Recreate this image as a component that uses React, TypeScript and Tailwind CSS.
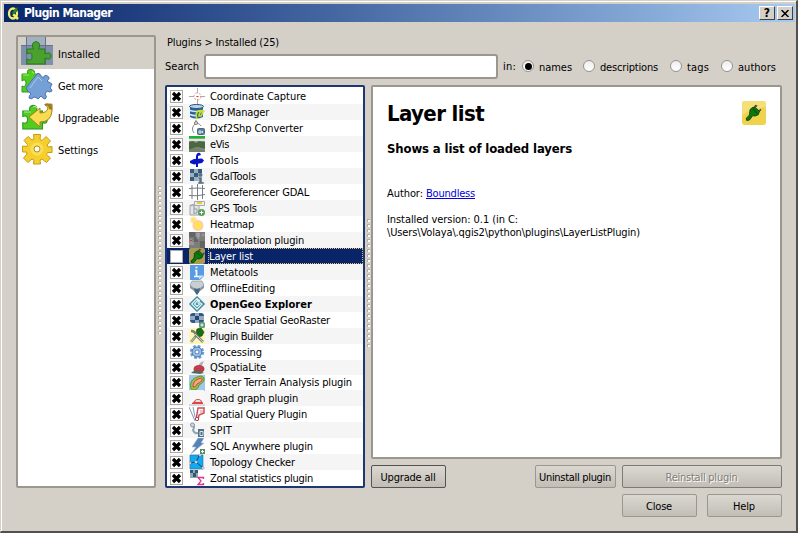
import { useLayoutEffect, useRef, useState } from "react";
import type { ReactNode } from "react";

// Text fitted to a given pixel width through letter spacing.
function T({ w, children, className = "" }: { w: number; children: string; className?: string }) {
  const ref = useRef<HTMLSpanElement>(null);
  const [ls, setLs] = useState(0);
  useLayoutEffect(() => {
    if (ref.current) setLs((w - ref.current.getBoundingClientRect().width) / children.length);
  }, []);
  return (
    <span ref={ref} style={{ letterSpacing: ls }} className={"inline-block whitespace-pre " + className}>
      {children}
    </span>
  );
}

const Ic = ({ children }: { children: ReactNode }) => (
  <svg viewBox="0 0 16 16" className="h-4 w-4 shrink-0">{children}</svg>
);

const plug = (
  <g>
    <path d="M9 4l1.500-2.500 1.500.5M12.500 7.500l2.500-2-.3-1" stroke="#444" strokeWidth="1.300" fill="none" />
    <path d="M5.500 5l2.500-2 2.500.2 3.500 3.500-1 3-3 1.300-2-.5-3 4-2.500.5-.5-2 3-3z" fill="#087c08" stroke="#103810" strokeWidth=".8" />
    <path d="M8 4.500l4 4" stroke="#0b4a10" />
  </g>
);

const icons: ReactNode[] = [
  <g><path d="M0 8.500h5M11 8.500h5M8.500 0v5M8.500 11v5" stroke="#aaa" /><circle cx="8.500" cy="8.500" r="3.500" fill="none" stroke="#ec8f8f" strokeDasharray="2 1.500" /><path d="M7.500 8.500h2" stroke="#c33" /></g>,
  <g><path d="M1 2v11q6 3 13 0V2" fill="#28629c" /><ellipse cx="7.500" cy="2.500" rx="7" ry="2" fill="#bdd6ea" stroke="#23527e" /><path d="M1 6.500q6 2 13 0M1 10.500q4 1.500 7 1" stroke="#d5e5f2" strokeWidth="1.600" fill="none" /><path d="M8 15q-2-5 1-8 3-1 5 0-4 1-4 5h2q2-3 2-5" fill="none" stroke="#c5dc2a" strokeWidth="1.700" /></g>,
  <g><path d="M7 0v3M7 3q-6 5-2 10M8 3q3 1 4 3" fill="none" stroke="#888" /><circle cx="7" cy="3" r="1.500" fill="#eee" stroke="#777" /><rect x="8.500" y="8.500" width="7" height="6" rx="1" fill="#5c7d93" stroke="#496a7e" /><path d="M10 13v-2h2v2zM13.500 11v2" stroke="#dce6ed" fill="none" /></g>,
  <g><path d="M0 1h16v15H0z" fill="#8da286" /><path d="M0 3h16v2H0z" fill="#dce6df" /><path d="M0 0h16v2H0z" fill="#19b52d" /><path d="M0 6l4-1 3 2 3-2 6 1v7l-8-2-8 3z" fill="#4b6741" /><path d="M0 14l7-3 9 3v2H0z" fill="#77826d" /></g>,
  <g fill="#0817c5"><path d="M7 15V4q1-4 4-3l1 2-3 1v11z" /><path d="M1 9l4-2 8-.5 2 2-2 2.500-8 1.500-4-1.500z" /></g>,
  <g><path d="M1 1h12v12H1z" fill="#98b1c0" /><path d="M1 1h4v4H1zM9 1h4v4H9zM5 5h4v4H5zM1 9h4v4H1z" fill="#365d77" /><circle cx="11.500" cy="7" r="2" fill="#577286" /><path d="M9 9h4v5h2v2H9v-2h1v-3H9z" fill="#577286" stroke="#ddd" strokeWidth=".5" /></g>,
  <path d="M3 1v14M8.500 0v16M13.500 1v14M0 4.500q8-1 16 0M0 11.500q8 1 16-1" fill="none" stroke="#747c85" />,
  <g><path d="M1 5h9v10H1z" fill="#e2e4e5" stroke="#a5a5a5" /><path d="M5.500 1.500h10v4h-10z" fill="#eee" stroke="#aaa" /><path d="M8 2h5v2H8z" fill="#ddd330" /><path d="M2 6q3-3 3 0v8M5 9h3v4H5" fill="none" stroke="#8f9ba5" /><circle cx="12.500" cy="12.500" r="3.500" fill="#559b59" /><path d="M12.500 10.500v4M10.500 12.500h4" stroke="white" /></g>,
  <g><circle cx="4.500" cy="4" r="3.500" fill="#ffe8b0" /><circle cx="9" cy="9.500" r="5.500" fill="#ffcdaa" /><circle cx="9" cy="9.500" r="3.500" fill="#ffe44c" /><circle cx="4.500" cy="4" r="2" fill="#ffe46a" /></g>,
  <g><path d="M0 0h16v16H0z" fill="#7c7c7c" /><path d="M0 0h6v5H0zM5 5h4v5H5zM11 9h5v7h-5z" fill="#646464" /><path d="M7 1h4v4H7zM0 10h5v3H0z" fill="#979797" /><g stroke="#ccc" strokeWidth=".5"><circle cx="14" cy="3" r="1" fill="#a44" /><circle cx="9" cy="2" r="1" fill="#567e9e" /><circle cx="9" cy="6" r="1" fill="#456e90" /><circle cx="2" cy="8.500" r="1.100" fill="#c12" /></g></g>,
  <g><rect width="16" height="16" rx="2" fill="#a99b52" />{plug}</g>,
  <g><path d="M1 1h14v11l-4 4H1z" fill="#579be2" /><path d="M10 15.500v-4h5z" fill="#c9e3fb" /><path d="M6 6.500h1.500v5.500M5 12.500h5M6.500 3.500h2" stroke="white" strokeWidth="1.700" fill="none" /></g>,
  <g><path d="M1 5l7-3 7 3v3l-4 3-3 4-3-4-4-3z" fill="#8797a8" /><path d="M3 1h10l2 4q-3 4-7 4T1 5z" fill="#c9d0d4" stroke="#8c959c" strokeWidth=".7" /><path d="M5 8q3 2 6 0l-1 4-2 3-2-3z" fill="#466580" /></g>,
  <g fill="none"><path d="M8 .5L15.500 8 8 15.500.5 8z" fill="#3b8ea1" stroke="#2c7e93" /><path d="M11 5L8 2.500 2.700 8 8 13.300 13 8 8.500 4.500 5.500 8 8 10.500 10.500 8 8.500 6.500" stroke="#e6f5f6" strokeWidth="1.200" /></g>,
  <g><rect x="1" y="1" width="14" height="10" rx="3" fill="#36587f" /><path d="M6 1h4v3h5v4h-5v3H6V8H1V4h5z" fill="#91abc6" /><path d="M6 4h4v4H6z" fill="#244772" /><rect x="10" y="10" width="6" height="6" rx="1.500" fill="#619b72" /><path d="M13 11.500v3M11.500 13h3" stroke="white" /></g>,
  <g><path d="M0 0h16v16H0z" fill="#fff6b5" /><path d="M8 1l4-1 3 4-2 4-4 1-2-4z" fill="#167116" stroke="#143b14" strokeWidth=".6" /><path d="M2 3q4 0 5 4l7 7M7 8l-5 6" fill="none" stroke="#7a8173" strokeWidth="2.500" /><path d="M6 6l8 8M6 9l-4 5" fill="none" stroke="#d0d3c6" /></g>,
  <g><circle cx="8" cy="8" r="5.700" fill="none" stroke="#719ed4" strokeWidth="3" strokeDasharray="2.600 1.880" /><circle cx="8" cy="8" r="5" fill="#99bfe8" stroke="#4474ac" /><circle cx="8" cy="8" r="2" fill="white" stroke="#537fb4" /></g>,
  <g><path d="M9 7q1-5 6-6l-3 7z" fill="#acb6bb" /><ellipse cx="10" cy="9" rx="5.500" ry="4" fill="#b93d43" /><path d="M2 13l4-3 5 1 4 2-4 1z" fill="#5b675b" /><path d="M8 7.500h5M8 9.500h5" stroke="#d37" strokeWidth=".6" /></g>,
  <g><path d="M0 0h16v16H0z" fill="#a3c7e7" /><path d="M2 14Q0 6 6 3q7-4 9 0 1 4-5 7-1 5-5 5-3 0-3-1z" fill="#8fc447" stroke="#609637" /><path d="M4 12Q4 6 9 4q5-2 4 1 0 2-5 4-1 4-4 3z" fill="#f3a786" stroke="#d6443c" /></g>,
  <g><rect width="15" height="15" rx="1" fill="#f7f7f7" /><path d="M3 13q2-1 3-3 3-2 6 0l2 3v1H3z" fill="#d84848" /><path d="M7 10h4l1 2H6z" fill="#eadada" /><path d="M0 14h16v2H0z" fill="#d7d9dc" /></g>,
  <g fill="none"><path d="M0 1l6 14M4 1l2 10" stroke="#7f9cc0" /><path d="M7 14l2-12h6v5l-5 2-1 5" stroke="#d04b56" strokeWidth="1.500" /><circle cx="8" cy="13" r="1.700" fill="#fff" stroke="#b23e49" /><path d="M11 4h3v3h-3z" fill="#f3bfc3" /></g>,
  <g><path d="M2 4q5-1 2 4 1 4 5 3" fill="none" stroke="#8ea3b3" strokeWidth="2" /><circle cx="3.500" cy="3" r="2" fill="#cad7df" stroke="#8098a9" /><path d="M9 7h6v8H9z" fill="#537289" /><path d="M11 9.500h3v4h-3z" stroke="#d8e2e8" fill="none" /></g>,
  <g><path d="M9 0h6l-3 5h3L2 16l5-7H3z" fill="#5682b6" stroke="#a1bddb" strokeWidth=".6" /><rect x="11" y="11" width="5" height="5" fill="#51905a" /><path d="M13.500 12v3M12 13.500h3" stroke="white" /></g>,
  <g><path d="M1 1h13v14H1z" fill="#0fa9f6" stroke="#3b647e" strokeWidth=".6" /><path d="M0 9l7-1 4-8M7 8l7 6" stroke="#263e52" fill="none" /><g fill="#fff" stroke="#777" strokeWidth=".5"><circle cx="7" cy="8" r="1.300" /><circle cx="1" cy="9" r="1.200" /><circle cx="14" cy="14" r="1.200" /><circle cx="11" cy="1" r="1.200" /></g></g>,
  <g><path d="M1 0h8v8H1z" fill="#8fa6b5" /><path d="M1 0h3v3H1zM6 0h3v3H6zM4 3h3v4H4z" fill="#315771" /><path d="M14.500 9V7.500H9l3 3.500-3 3.500h5.500V13" stroke="#de3191" strokeWidth="1.300" fill="none" /></g>,
];

const rows: [string, number][] = [
  ["Coordinate Capture", 96], ["DB Manager", 59], ["Dxf2Shp Converter", 93], ["eVis", 19], ["fTools", 29],
  ["GdalTools", 46], ["Georeferencer GDAL", 99], ["GPS Tools", 47], ["Heatmap", 44], ["Interpolation plugin", 94],
  ["Layer list", 44], ["Metatools", 48], ["OfflineEditing", 65], ["OpenGeo Explorer", 102], ["Oracle Spatial GeoRaster", 120],
  ["Plugin Builder", 63], ["Processing", 52], ["QSpatiaLite", 56], ["Raster Terrain Analysis plugin", 142], ["Road graph plugin", 88],
  ["Spatial Query Plugin", 97], ["SPIT", 22], ["SQL Anywhere plugin", 103], ["Topology Checker", 85], ["Zonal statistics plugin", 103],
];

const puzzle = "M1 10h9q-2-6 4-7 7 1 4 7h8v7q6-2 6 4t-6 4v8H1v-8q6 2 6-4t-6-4z";
const Big = ({ children }: { children: ReactNode }) => <svg viewBox="0 0 32 32" className="h-8 w-8">{children}</svg>;

const nav: [string, number, ReactNode][] = [
  ["Installed", 42, <Big><path d="M5 0h20v8h7v20H0V8h5z" fill="#7e90aa" /><path d="M5 0h20v8H5z" fill="#a2afc0" /><path d="M5.500 0v28M24.500 0v28M0 8.500h32" stroke="#63738b" fill="none" /><path d="M6 12h6.500q-2-3-.5-6 3-3 6 0 1.500 3-.5 6H24v5q6-3 6 2t-6 2v6H6v-5q5 3 5-2.500T6 17z" fill="#4aa12e" stroke="#27791f" /></Big>],
  ["Get more", 45, <Big><path d="M1 5h6Q5 0 10 .5T13 5h6v18H1v-6q4 2 4-3t-4-2z" fill="#52cc20" stroke="#33971e" /><path d="M2 6h6M11 3q1-1 2 2" fill="none" stroke="#a1ed6e" /><path d="M17 4l5.500 5q.5-4 4-2t-.5 5l5 3-2 4q2 1 2 3-2 2-5 0l-2 3q3 3 0 5-3-1-4-3l-3 3q-2-2-4-2-2 3-5 1 0-3 2-4-4-3-5-6 4-6 12-15z" fill="#75a0d5" stroke="#4773af" /><path d="M9 19l8-11 4 4" fill="none" stroke="#aac8ec" /></Big>],
  ["Upgradeable", 61, <Big><path d={puzzle} transform="translate(1 2) scale(.79)" fill="#52cc20" stroke="#289422" strokeWidth="1.300" /><path d="M3 11h7M12 6q2-2 4 1" fill="none" stroke="#b0f383" /><path d="M8 16l11-9v5q7 0 8-5-1-2-3-3l7-1v7q-1 11-12 11v5z" fill="#f9dc54" stroke="#a18317" /><path d="M23 4q1-3 7-1 2 3 1 6l-3-1q0-4-5-4z" fill="#9c7b28" /></Big>],
  ["Settings", 40, <Big><path d="M12.500 1.500h7l-.5 5 2 1 4-4 4.500 4.500-3.500 4 1 2 4-.5v6l-4.500 0-1 2 4 3.500-4 4.500-4.500-3.500-2 1 .5 4h-7l.5-4-2-1-4 3.500-4.500-4.500 3.500-4-.5-2h-4v-6l4.500.5.5-2-3.500-4L7 3.500l4 3.500 2-1z" fill="#f4cf2e" stroke="#c79c12" /><circle cx="16" cy="16" r="6.500" fill="#f9df58" /><circle cx="16" cy="16" r="3" fill="white" stroke="#b28c19" /></Big>],
];

function Check({ on }: { on: boolean }) {
  return (
    <span className="flex h-[13px] w-[13px] shrink-0 items-center justify-center border border-[#aaa8a4] bg-white">
      {on && <svg viewBox="0 0 11 11" className="h-[11px] w-[11px]"><path d="M2 2l7 7m0-7l-7 7" stroke="black" strokeWidth="3.200" /></svg>}
    </span>
  );
}

function Grip({ count }: { count: number }) {
  return (
    <div className="flex w-1 flex-col gap-[2px]">
      {Array.from({ length: count }, (_, i) => (
        <i key={i} className="h-[3px] w-[3px] border-l border-t border-[#b1ada5] bg-white" />
      ))}
    </div>
  );
}

function Radio({ on, label, w, className }: { on?: boolean; label: string; w: number; className: string }) {
  return (
    <div className={"flex items-center " + className}>
      <span className="mr-[5px] flex h-3 w-3 items-center justify-center rounded-full border border-[#96938d] bg-gradient-to-b from-[#eeeeee] to-white">
        {on && <i className="h-[7px] w-[7px] rounded-full bg-black" />}
      </span>
      <T w={w} className="relative top-px">{label}</T>
    </div>
  );
}

function Btn({ label, w, className }: { label: string; w: number; className: string }) {
  return (
    <button className={"flex h-[23px] shrink-0 items-center justify-center rounded-[2px] border bg-gradient-to-b from-[#dbd8d1] to-[#c2beb6] pr-px pt-px " + className}>
      <T w={w}>{label}</T>
    </button>
  );
}

export default function App() {
  return (
    <div className="h-[533px] w-[798px] overflow-hidden border-b-2 border-l border-r-2 border-t border-b-[#505050] border-l-[#d4d0c8] border-r-[#505050] border-t-[#d4d0c8] bg-[#d4d0c8] font-['DejaVu_Sans_Condensed','DejaVu_Sans',sans-serif] text-[11px] leading-[13px] text-black">
      <div className="h-full border-l border-t border-white pl-[2px] pr-[1px] pt-[2px]">
        <header className="flex h-[18px] items-center bg-gradient-to-r from-[#0a246a] to-[#a6caf0] pl-[3px] pr-[2px]">
          <svg viewBox="0 0 13 14" className="mr-1 h-[14px] w-[13px]"><ellipse cx="6" cy="7.500" rx="4" ry="5" fill="none" stroke="#eff066" strokeWidth="2.300" /><path d="M6 8l5 5" stroke="#eff066" strokeWidth="2.500" /><path d="M5 9q0-5 6-8l-1 4z" fill="#31943b" stroke="#164f24" strokeWidth=".7" /></svg>
          <T w={88} className="text-[12px] font-bold text-white">Plugin Manager</T>
          <div className="ml-auto flex gap-[2px]">
            {["?", "x"].map((s) => (
              <span key={s} className="flex h-[14px] w-4 items-center justify-center border border-b-[#404040] border-l-white border-r-[#404040] border-t-white bg-[#d4d0c8] text-[12px] font-bold">
                {s === "?" ? "?" : <svg viewBox="0 0 8 7" className="h-[7px] w-2"><path d="M.5 0l7 7m0-7l-7 7" stroke="black" strokeWidth="1.500" /></svg>}
              </span>
            ))}
          </div>
        </header>
        <main className="flex pl-3 pt-[13px]">
          <nav className="h-[453px] w-[140px] shrink-0 rounded-[2px] border-2 border-[#9b978f] bg-white">
            {nav.map(([label, w, icon], i) => (
              <div key={label} className={"flex h-8 items-center gap-[5px] pl-[3px] " + (i === 0 ? "bg-[#d4d0c8]" : "")}>
                {icon}
                <span className="pt-0.5"><T w={w}>{label}</T></span>
              </div>
            ))}
          </nav>
          <div className="ml-[2px] mt-[151px]"><Grip count={30} /></div>
          <div className="ml-[3px] w-[617px]">
            <div className="h-[18px] pl-[2px] pt-px"><T w={112}>{"Plugins > Installed (25)"}</T></div>
            <div className="flex h-[26px] items-center">
              <div className="w-[39px] shrink-0 pt-px"><T w={34}>Search</T></div>
              <div className="h-[25px] w-[294px] shrink-0 rounded-[3px] border-2 border-[#9b978f] bg-white" />
              <div className="ml-[5px] w-[19px] pt-px"><T w={13}>in:</T></div>
              <Radio on label="names" w={33} className="w-[61px]" />
              <Radio label="descriptions" w={58} className="w-[87px]" />
              <Radio label="tags" w={22} className="w-[51px]" />
              <Radio label="authors" w={38} className="w-[60px]" />
            </div>
            <div className="mt-[6px] flex">
              <div className="h-[403px] w-[200px] shrink-0 rounded-[2px] border-2 border-[#1e3671] bg-white pt-px">
                {rows.map(([label, w], i) => (
                  <div key={label} className={"flex items-center pl-[3px] " + (i === 17 || i === 18 ? "h-[15px] " : "h-4 ") + (i === 10 ? "bg-[#0a246a] text-white" : i % 2 ? "bg-[#f5f5f5]" : "")}>
                    <Check on={i !== 10} />
                    <span className="ml-[6px] mr-[3px] flex"><Ic>{icons[i]}</Ic></span>
                    <span className={"flex h-full items-center " + (i === 10 ? "flex-1 border border-dotted border-[#e0c060]" : "pl-[2px]")}>
                      <T w={w} className={i === 13 ? "font-bold" : ""}>{label}</T>
                    </span>
                  </div>
                ))}
              </div>
              <div className="ml-[2px] mt-[134px]"><Grip count={26} /></div>
              <div className="w-[411px]">
                <section className="h-[374px] rounded-[2px] border-2 border-[#9b978f] bg-white pl-[14px] pr-[14px] pt-[14px]">
                  <div className="flex h-[40px] items-start justify-between">
                    <h1 className="text-[22px] font-bold leading-[26px]"><T w={97}>Layer list</T></h1>
                    <svg viewBox="0 0 24 24" className="h-6 w-6"><rect width="24" height="24" rx="3" fill="#f0d34c" /><path d="M0 3q0-3 3-3h18q3 0 3 3v3Q10 7 0 14z" fill="#f5df79" /><g transform="translate(2 3) scale(1.100)">{plug}</g></svg>
                  </div>
                  <h2 className="text-[13px] font-bold leading-4"><T w={185}>Shows a list of loaded layers</T></h2>
                  <p className="mt-[30px]"><T w={39}>Author: </T><T w={49} className="text-[#0000e0] underline">Boundless</T></p>
                  <p className="mt-[13px]"><T w={131}>Installed version: 0.1 (in C:</T><br /><T w={253}>{"\\Users\\Volaya\\.qgis2\\python\\plugins\\LayerListPlugin)"}</T></p>
                </section>
                <div className="mt-[6px] flex">
                  <Btn label="Upgrade all" w={55} className="w-[75px] border-[#555350]" />
                  <Btn label="Uninstall plugin" w={72} className="ml-[89px] w-[81px] border-[#9b978f]" />
                  <Btn label="Reinstall plugin" w={72} className="ml-[6px] w-[160px] border-[#7d7a75] text-[#817e78] [text-shadow:1px_1px_#fff]" />
                </div>
                <div className="mt-[6px] flex justify-end gap-[10px]">
                  <Btn label="Close" w={26} className="w-[75px] border-[#9b978f]" />
                  <Btn label="Help" w={22} className="w-[75px] border-[#9b978f]" />
                </div>
              </div>
            </div>
          </div>
        </main>
      </div>
    </div>
  );
}
